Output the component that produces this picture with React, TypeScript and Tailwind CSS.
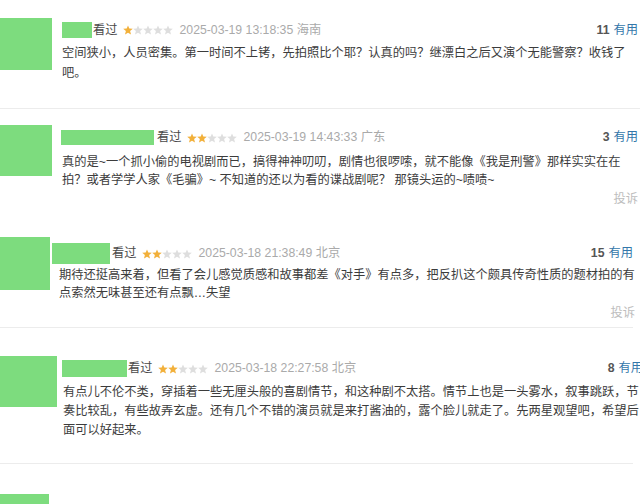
import { ReactNode } from 'react'

interface Comment {
  rowClass: string
  avatarClass: string
  bodyClass: string
  nameClass: string
  headClass: string
  textClass: string
  reportClass?: string
  votesClass?: string
  stars: number
  date: string
  votes: string
  lines: string[]
}

const comments: Comment[] = [
  {
    rowClass: 'h-[108px] pt-[18px] pr-[2px]',
    avatarClass: 'w-[52px] h-[52px]',
    bodyClass: 'ml-[10px] pt-[4px]',
    nameClass: 'w-[30px] h-[16px] mr-px',
    headClass: 'h-[16px]',
    textClass: 'mt-[5px] leading-[20px]',
    stars: 1,
    date: '2025-03-19 13:18:35 海南',
    votes: '11',
    lines: [
      '空间狭小，人员密集。第一时间不上铐，先拍照比个耶？认真的吗？继漂白之后又演个无能警察？收钱了',
      '吧。',
    ],
  },
  {
    rowClass: 'h-[116px] pt-[16px] pr-[2px]',
    avatarClass: 'w-[52px] h-[51px]',
    bodyClass: 'ml-[9px] pt-[5px]',
    nameClass: 'w-[93px] h-[15px] mr-[3px]',
    headClass: 'h-[15px]',
    textClass: 'ml-px mt-[8px] leading-[18px]',
    reportClass: 'mt-px leading-[18px]',
    stars: 2,
    date: '2025-03-19 14:43:33 广东',
    votes: '3',
    lines: [
      '真的是~一个抓小偷的电视剧而已，搞得神神叨叨，剧情也很啰嗦，就不能像《我是刑警》那样实实在在',
      '拍？或者学学人家《毛骗》~ 不知道的还以为看的谍战剧呢？ 那镜头运的~啧啧~',
    ],
  },
  {
    rowClass: 'h-[102px] pt-[12px] pr-[5px]',
    avatarClass: 'w-[50px] h-[53px]',
    bodyClass: 'ml-[2px] pt-[6px]',
    nameClass: 'w-[58px] h-[21px] mr-[2px]',
    headClass: 'h-[21px]',
    textClass: 'ml-[7px] mt-[2px] leading-[18px]',
    reportClass: 'mt-[2px] leading-[18px]',
    votesClass: 'mr-[2px]',
    stars: 2,
    date: '2025-03-18 21:38:49 北京',
    votes: '15',
    lines: [
      '期待还挺高来着，但看了会儿感觉质感和故事都差《对手》有点多，把反扒这个颇具传奇性质的题材拍的有',
      '点索然无味甚至还有点飘…失望',
    ],
  },
  {
    rowClass: 'h-[135px] pt-[28px] w-[643px]',
    avatarClass: 'w-[57px] h-[51px]',
    bodyClass: 'ml-[5px] pt-[4px]',
    nameClass: 'w-[65px] h-[17px] mr-px',
    headClass: 'h-[17px]',
    textClass: 'ml-px mt-[6px] leading-[19px]',
    stars: 2,
    date: '2025-03-18 22:27:58 北京',
    votes: '8',
    lines: [
      '有点儿不伦不类，穿插着一些无厘头般的喜剧情节，和这种剧不太搭。情节上也是一头雾水，叙事跳跃，节',
      '奏比较乱，有些故弄玄虚。还有几个不错的演员就是来打酱油的，露个脸儿就走了。先两星观望吧，希望后',
      '面可以好起来。',
    ],
  },
  {
    rowClass: 'h-[40px] pt-[30px] pr-[2px]',
    avatarClass: 'w-[49px] h-[52px]',
    bodyClass: 'ml-[5px] pt-[5px]',
    nameClass: 'w-[43px] h-[16px] mr-[3px]',
    headClass: 'h-[16px] pt-[8px]',
    textClass: 'mt-[5px] leading-[20px]',
    stars: 1,
    date: '2025-03-18 21:36:24 北京',
    votes: '14',
    lines: [''],
  },
]

function Stars({ count }: { count: number }) {
  return (
    <span className="flex">
      {[0, 1, 2, 3, 4].map((i) => (
        <svg key={i} viewBox="0 0 10 10" className="w-[10px] h-[10px]">
          <polygon
            points="5,0.4 6.3,3.6 9.8,3.8 7.1,6.1 8,9.6 5,7.7 2,9.6 2.9,6.1 0.2,3.8 3.7,3.6"
            fill={i < count ? '#f2b03a' : '#dedede'}
          />
        </svg>
      ))}
    </span>
  )
}

function Separator({ className }: { className: string }) {
  return <div className={`h-px bg-[#ececec] ${className}`} />
}

function CommentRow({ c }: { c: Comment }) {
  return (
    <div className={`flex items-start ${c.rowClass}`}>
      <div className={`shrink-0 bg-[#7ddc7e] ${c.avatarClass}`} />
      <div className={`flex-1 min-w-0 ${c.bodyClass}`}>
        <div className={`flex items-center text-[12.25px] leading-none ${c.headClass}`}>
          <span className={`shrink-0 h-full bg-[#7ddc7e] ${c.nameClass}`} />
          <span className="text-[#4a4a4a]">看过</span>
          <span className="ml-[5px]">
            <Stars count={c.stars} />
          </span>
          <span className="ml-[7px] text-[#aaaaaa]">{c.date}</span>
          <span className={`ml-auto whitespace-nowrap ${c.votesClass ?? ''}`}>
            <span className="text-[#555] font-semibold">{c.votes}</span>
            <span className="ml-[4px] text-[#3377aa]">有用</span>
          </span>
        </div>
        <div className={`text-[12.25px] text-[#3c3c3c] whitespace-nowrap ${c.textClass}`}>
          {c.lines.map((line, i) => (
            <div key={i}>{line}</div>
          ))}
        </div>
        {c.reportClass && (
          <div className={`text-right text-[12.25px] text-[#bdbdbd] ${c.reportClass}`}>投诉</div>
        )}
      </div>
    </div>
  )
}

export default function App(): ReactNode {
  return (
    <div className="w-[640px] h-[504px] overflow-hidden bg-white font-['Liberation_Sans','Noto_Sans_CJK_SC',sans-serif]">
      <CommentRow c={comments[0]} />
      <Separator className="w-[640px]" />
      <CommentRow c={comments[1]} />
      <CommentRow c={comments[2]} />
      <Separator className="w-[633px]" />
      <CommentRow c={comments[3]} />
      <Separator className="w-[633px]" />
      <CommentRow c={comments[4]} />
    </div>
  )
}
